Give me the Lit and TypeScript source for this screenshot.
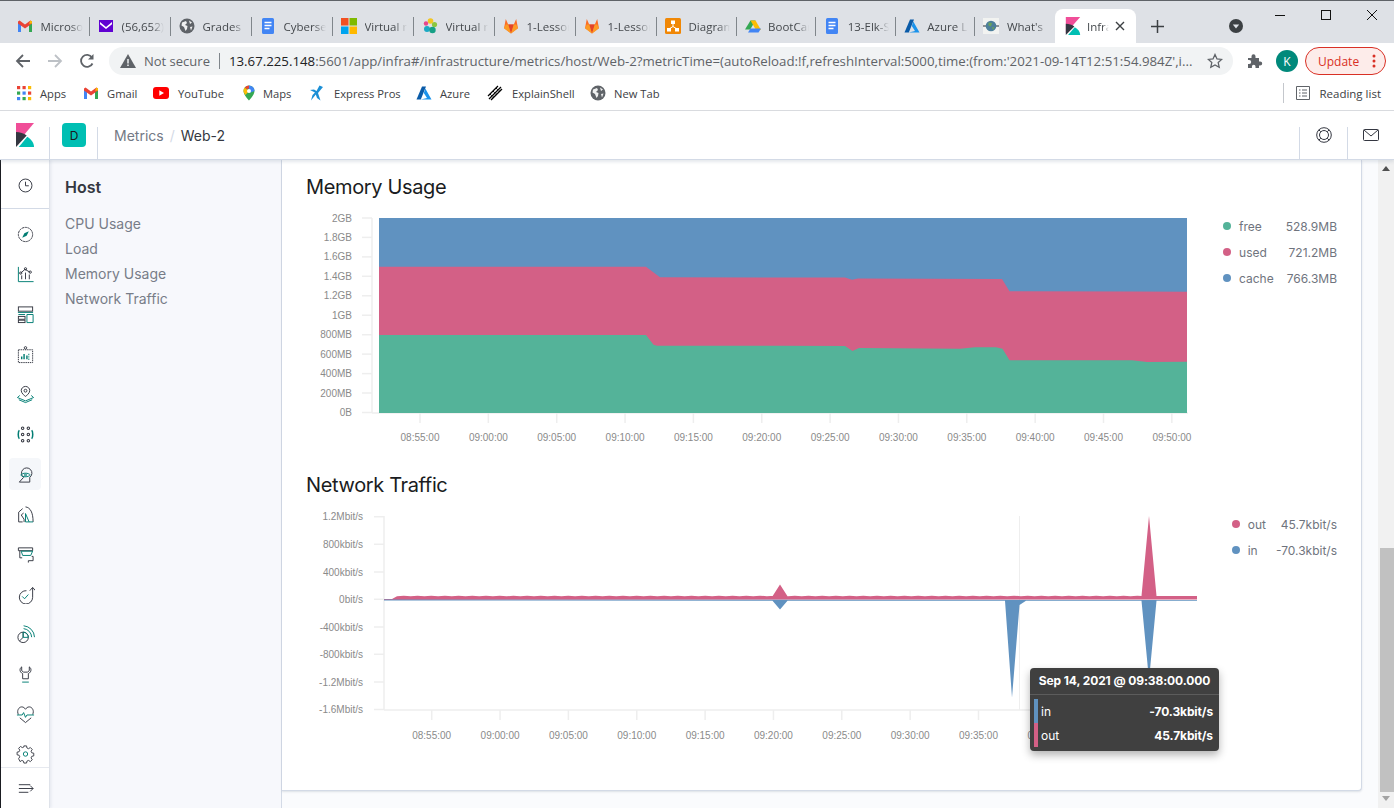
import { LitElement, html, css, svg } from 'lit';
import { customElement } from 'lit/decorators.js';

const BLUE = '#6092c0';
const PINK = '#d36086';
const GREEN = '#54b399';

const favicons: Record<string, any> = {
  gmail: svg`<path d="M1 4v10h3V7z" fill="#4285f4"/><path d="M15 4v10h-3V7z" fill="#34a853"/><path d="M1 3.5 2.6 2.4 8 6.6l5.4-4.2L15 3.5V5.4L8 10.6 1 5.4z" fill="#ea4335"/><path d="M12 5.8 13.4 2.4 15 3.5v2z" fill="#fbbc04"/>`,
  mail: svg`<rect x="1" y="2" width="14" height="12" fill="#6001d2"/><path d="M2 4l6 5 6-5v2.200L8 11 2 6.200z" fill="#fff"/>`,
  globe: svg`<circle cx="8" cy="8" r="7.500" fill="#5f6368"/><path d="M3 4.500 7 3l1 2-2 2 2.500 1L8 11l-1.500 2L5 9 2.500 7.500zM10 2.500l3 2-2 1.500zM11 9l2.500-.5L12 12.500z" fill="#fff" opacity=".9"/>`,
  docs: svg`<path d="M2 1.500A1.500 1.500 0 013.500 0h9A1.500 1.500 0 0114 1.500v13a1.500 1.500 0 01-1.500 1.500h-9A1.500 1.500 0 012 14.500z" fill="#4285f4"/><path d="M4.500 4.500h7M4.500 7.500h7M4.500 10.500h5" stroke="#fff" stroke-width="1.400"/>`,
  ms: svg`<rect x="0" y="0" width="7.500" height="7.500" fill="#f25022"/><rect x="8.500" y="0" width="7.500" height="7.500" fill="#7fba00"/><rect x="0" y="8.500" width="7.500" height="7.500" fill="#00a4ef"/><rect x="8.500" y="8.500" width="7.500" height="7.500" fill="#ffb900"/>`,
  virt: svg`<circle cx="8.500" cy="3" r="2.800" fill="#f3c623"/><circle cx="4" cy="5.500" r="2.200" fill="#e8478b"/><circle cx="12.500" cy="6.500" r="2.600" fill="#8cc63f"/><circle cx="5" cy="11" r="3" fill="#1ba9c4"/><circle cx="10.500" cy="12" r="3.200" fill="#16a086"/>`,
  gitlab: svg`<path d="M8 15.500 1 10.200 2.800 1l2.400 5.500h5.600L13.200 1 15 10.200z" fill="#fc6d26"/><path d="M8 15.500 5.200 6.500h5.600z" fill="#e24329"/><path d="M1 10.200 2.800 6.500h2.400L8 15.500zM15 10.200l-1.800-3.700h-2.400L8 15.500z" fill="#fca326" opacity=".85"/>`,
  diagram: svg`<rect x="0" y="0" width="16" height="16" rx="1.500" fill="#f08705"/><path d="M8 5.500v3M8 8.500 4 11M8 8.500l4 2.500" stroke="#fff"/><rect x="6" y="2.500" width="4" height="3.500" fill="#fff"/><rect x="2" y="10" width="4" height="3.500" fill="#fff"/><rect x="10" y="10" width="4" height="3.500" fill="#fff"/>`,
  drive: svg`<path d="M5.500 1.500h5L5.200 10.500H0z" fill="#34a853" transform="translate(0 1)"/><path d="M5.500 2.500h5l5.500 9.500h-5z" fill="#fbbc04"/><path d="M3 14.500l2.500-4H16l-2.500 4z" fill="#4285f4"/>`,
  azure: svg`<path d="M6 1.500h4L4.800 14.500H.5z" fill="#0a5ba8"/><path d="M9.300 3.500 15.500 14.500H4.800L11 13 7.800 8z" fill="#1b93eb"/>`,
  earth: svg`<rect x="0" y="0" width="16" height="16" fill="#f2f3f1"/><path d="M0 7h3v2H0zM13 7h3v2h-3z" fill="#8d9296"/><circle cx="8" cy="8" r="5.300" fill="#4d7f9b"/><path d="M5.500 4.500l3.500.5-1 3.500-2.500-1zM9 9l2.500.5-1.500 2.500z" fill="#6aa35a"/>`,
  kibana: svg`<path d="M0 0H16L0 18z" fill="#f04e98"/><path d="M0 7.500C3.500 7.500 7 8.500 9.500 10.500L0 20z" fill="#343741"/><path d="M2.500 20 10 11.500C13.500 13.500 16 16.500 16 20z" fill="#00bfb3"/>`,
};

const tabs = [
  { icon: 'gmail', title: 'Microsoft' },
  { icon: 'mail', title: '(56,652) Yahoo' },
  { icon: 'globe', title: 'Grades' },
  { icon: 'docs', title: 'Cybersecurity' },
  { icon: 'ms', title: 'Virtual machines' },
  { icon: 'virt', title: 'Virtual machines' },
  { icon: 'gitlab', title: '1-Lesson-Plans' },
  { icon: 'gitlab', title: '1-Lesson-Plans' },
  { icon: 'diagram', title: 'Diagrams' },
  { icon: 'drive', title: 'BootCamp' },
  { icon: 'docs', title: '13-Elk-Stack' },
  { icon: 'azure', title: 'Azure Labs' },
  { icon: 'earth', title: "What's" },
];

const bookmarks = [
  { icon: 'apps', label: 'Apps', gap: 8, width: 67 },
  { icon: 'gmail', label: 'Gmail', gap: 8, width: 70 },
  { icon: 'yt', label: 'YouTube', gap: 9, width: 88 },
  { icon: 'maps', label: 'Maps', gap: 6, width: 68 },
  { icon: 'xp', label: 'Express Pros', gap: 9, width: 107 },
  { icon: 'azure', label: 'Azure', gap: 8, width: 71 },
  { icon: 'shell', label: 'ExplainShell', gap: 9, width: 103 },
  { icon: 'globe', label: 'New Tab', gap: 8, width: 90 },
];

const bookmarkIcons: Record<string, any> = {
  ...favicons,
  apps: svg`${[0, 5.5, 11].flatMap((y, r) => [0, 5.5, 11].map((x, c) => svg`<rect x=${x + 1} y=${y + 1} width="3.200" height="3.200" fill=${[['#ea4335', '#ea4335', '#fbbc04'], ['#34a853', '#4285f4', '#ea4335'], ['#4285f4', '#34a853', '#fbbc04']][r][c]}/>`))}`,
  yt: svg`<rect x="0" y="2" width="16" height="12" rx="3" fill="#f00"/><path d="M6.300 5.200 11 8l-4.700 2.800z" fill="#fff"/>`,
  maps: svg`<path d="M8 0.500A5.500 5.500 0 002.500 6C2.500 10 8 15.500 8 15.500S13.500 10 13.500 6A5.500 5.500 0 008 .5z" fill="#34a853"/><path d="M8 .5A5.500 5.500 0 0113.500 6L8 8z" fill="#4285f4"/><path d="M3.800 2.500 8 6 4.500 10C3.500 8.800 2.500 7.200 2.500 6c0-1.400.5-2.600 1.300-3.500z" fill="#fbbc04"/><path d="M8 .5a5.500 5.500 0 00-4.200 2L6 4.300 8 3.500z" fill="#ea4335"/><circle cx="8" cy="6" r="2" fill="#fff"/>`,
  xp: svg`<path d="M10.500 0.500 14 2 9 8l2.500 7.500L8 13 6.800 9.500 2 15.500 3.500 10 6 7.500 1 5 5 4.500 7.500 6z" fill="#1a8fd6"/>`,
  shell: svg`<g stroke="#000" stroke-width="1.300" fill="none"><path d="M2 14 14 2M4 15 15 4M1 11 11 1"/><path d="M3 9l4 4M6 6l4 4M9 3l4 4" stroke-dasharray="1 1"/></g>`,
};

// stroke icons for the kibana side nav, dark lines with a teal accent
const navIcons = [
  svg`<circle cx="10" cy="10" r="6.800"/><path d="M10 6v4.300h3.500"/>`,
  svg`<circle cx="10" cy="10" r="7.500" stroke-dasharray="2.500 .6"/><path class="accent-fill" d="M13.500 6.500 11.200 11.200 6.500 13.500 8.800 8.800z"/>`,
  svg`<path class="accent" d="M2.500 2v15.500h16"/><path d="M6 15v-4M10 15V8M14 15v-5M5 8.500l4.500-4 5 3"/><circle cx="5" cy="8.500" r="1.200"/><circle cx="10" cy="4" r="1.200"/><circle cx="15" cy="7.500" r="1.200"/>`,
  svg`<rect x="2.500" y="2" width="15" height="4.500"/><rect x="2.500" y="12" width="7" height="3" /><rect x="2.500" y="16" width="7" height="2.500" /><path class="accent" d="M2 7.800h16M11.500 10h6.500v8.500h-6.500zM2.500 10h7"/>`,
  svg`<path d="M2.500 5h15v13.500h-15z" stroke-dasharray="1.500 .8"/><circle cx="10" cy="3" r="1.300"/><path class="accent" d="M6 15v-3M8.500 15V9.500M11.500 15V11M14 10h-1M14 12.500h-1M14 15h-1" stroke-width="1.500"/>`,
  svg`<path d="M10 1.500a4.500 4.500 0 014.500 4.500C14.500 9 10 12 10 12S5.500 9 5.500 6A4.500 4.500 0 0110 1.500z"/><circle cx="10" cy="6" r="1.500"/><path class="accent" d="M4 11 1.500 13.200l8.500 3.500 8.500-3.500L16 11M3 15.500l7 3 7-3"/>`,
  svg`<g stroke-width="1.100"><circle cx="7" cy="3.500" r="1.300"/><circle cx="13" cy="3.500" r="1.300"/><circle cx="7" cy="10" r="1.300"/><circle cx="13" cy="10" r="1.300"/><circle cx="7" cy="16.500" r="1.300"/><circle cx="13" cy="16.500" r="1.300"/></g><path class="accent" stroke-width="1.600" d="M3.500 5.500C2 7 2 13 3.500 14.500M16.500 5.500C18 7 18 13 16.500 14.500M2.500 10h.5M17 10h.5"/>`,
  svg`<path d="M2.500 17.500 7 12.500A5.500 5.500 0 1113.500 12.500V17.500z" transform="translate(1 .5)"/><path class="accent" d="M5 10.500C7 8 13 8 15 10.500 13 13 7 13 5 10.500z"/><circle class="accent" cx="10" cy="10.500" r="1"/>`,
  svg`<path d="M7 17.800H2.800V7.500L7 3.800M8 8.500 5.500 10.500l3 4.500v3"/><path d="M10 2C15 2.500 18 8 18 17.800"/><path class="accent" d="M18 17.800H10V9L13.800 17.800"/>`,
  svg`<path d="M2.500 3h15v3h-15zM4 6v7.500h2.500M13 16.500h5v-4.500h-1.500M13 16.500v2"/><path class="accent" d="M5.500 6.500h12L15.500 11h-8.500z"/>`,
  svg`<path d="M11 6a7 7 0 106.500 7V3"/><path d="M14.500 6l3-3.500 3 3.500"/><path class="accent" d="M6.500 12l2.500 2.500 4-4.500"/>`,
  svg`<circle cx="7.500" cy="13" r="5.500"/><path d="M7.500 13V7.500M7.500 13 3.500 17"/><path class="accent" d="M7.500 7.500A5.500 5.500 0 0113 13H7.500zM8 3.800a9.500 9.500 0 018.500 9M8 .8a12.500 12.500 0 0111.500 12"/>`,
  svg`<path d="M6 2C3.500 3.500 3.500 7.500 7 9v5.500h6V9C16.500 7.500 16.500 3.500 14 2v4l-2 1.500H8L6 6z"/><path class="accent" d="M6.500 18h7"/>`,
  svg`<path d="M10 18.500 4 13.500M10 18.500l6-5M2.500 10C.5 6 3 2 6 2c1.800 0 3 1 4 2.500C11 3 12.200 2 14 2c3 0 5.500 4 3.500 8"/><path class="accent" d="M1 10.500h5.500L8 8l2 5 1.500-2.500H19"/>`,
  svg`<path d="M8.500 1.500h3l.4 2.300 1.800.8 2-1.300 2.100 2.100-1.300 2 .8 1.800 2.200.4v3l-2.200.4-.8 1.800 1.300 2-2.100 2.100-2-1.300-1.800.8-.4 2.100h-3l-.4-2.100-1.800-.8-2 1.300L2.700 15.600l1.300-2-.8-1.800L1 11.400v-3l2.200-.4.8-1.800-1.300-2L4.800 2.100l2 1.300 1.800-.8z" transform="scale(.95) translate(.2 -.5)"/><circle class="accent" cx="10" cy="9.500" r="2.300"/>`,
  svg`<path d="M3 6h12M3 10h15M3 14h10"/><path d="M15 7l3 3-3 3" />`,
];

function axisTicks(x: number, ys: number[], labels: string[], labelX: number) {
  return ys.map(
    (y, i) => svg`<line class="tick" x1=${x - 10} x2=${x} y1=${y} y2=${y}></line>
      <text class="axis" x=${labelX} y=${y + 3.5} text-anchor="end">${labels[i]}</text>`
  );
}

function timeTicks(start: number, y: number, labelY: number, count: number) {
  const times = ['08:55:00', '09:00:00', '09:05:00', '09:10:00', '09:15:00', '09:20:00', '09:25:00', '09:30:00', '09:35:00', '09:40:00', '09:45:00', '09:50:00'];
  return times.slice(0, count).map((t, i) => {
    const x = start + i * 68.35;
    return svg`<line class="tick" x1=${x} x2=${x} y1=${y} y2=${y + 10}></line>
      <text class="axis" x=${x} y=${labelY} text-anchor="middle">${t}</text>`;
  });
}

// small ripple along the top of the outbound band, one bump per sample
function ripple(from: number, to: number) {
  const pts: string[] = [];
  for (let x = from; x < to; x += 13.7) {
    pts.push(`${x},596.300`, `${x + 6.8},595.700`);
  }
  return pts.join(' ');
}

const pinkTop = '379,266.700 646,266.700 660,277.300 845,277.500 852,279.700 858,278.500 1002,279 1009.500,291.300 1132,291.400 1187,291.800';
const greenTop = '379,335 646,335 653.500,344.700 657,345.700 780,345.700 845,346 852.500,351 859,348 960,348.700 975,347.300 996,347.300 1002.500,348.700 1009.500,360.300 1132,360.300 1147,362 1187,361.700';

const memoryChart = svg`
  <line class="tick" x1="372" x2="372" y1="218" y2="413"></line>
  <line class="tick" x1="372" x2="1188" y1="413" y2="413"></line>
  ${axisTicks(372, [218, 237.400, 256.900, 276.300, 295.800, 315.200, 334.700, 354.100, 373.600, 393, 412.500],
    ['2GB', '1.8GB', '1.6GB', '1.4GB', '1.2GB', '1GB', '800MB', '600MB', '400MB', '200MB', '0B'], 352)}
  ${timeTicks(420, 413, 441, 12)}
  <rect x="379" y="218" width="808" height="195" fill=${BLUE}></rect>
  <polygon points="${pinkTop} 1187,413 379,413" fill=${PINK}></polygon>
  <polygon points="${greenTop} 1187,413 379,413" fill=${GREEN}></polygon>
`;

const networkChart = svg`
  <line class="tick" x1="384" x2="384" y1="516" y2="710"></line>
  <line class="tick" x1="384" x2="1197" y1="710" y2="710"></line>
  <line class="cross" x1="1019.500" x2="1019.500" y1="516" y2="710"></line>
  ${axisTicks(384, [516.700, 544.300, 572, 599.300, 627, 654.300, 682, 709.500],
    ['1.2Mbit/s', '800kbit/s', '400kbit/s', '0bit/s', '-400kbit/s', '-800kbit/s', '-1.2Mbit/s', '-1.6Mbit/s'], 363)}
  ${timeTicks(431.700, 710, 739, 12)}
  <polygon fill=${BLUE} points="384,599 1197,600 1197,600.800 1156.500,600.800 1149,680 1141.500,600.800 1026,600.800 1019.500,605 1012,697.500 1005,600.800 787.500,600.800 780,609.500 772.500,600.800 384,600.500"></polygon>
  <polygon fill=${PINK} points="384,599 392,599 397,596.200 ${ripple(397, 772)} 772.500,596.200 780,584.500 787.500,596.200 ${ripple(788, 1141)} 1141.500,596 1149,516 1156.500,596 1197,596 1197,599.600 384,599.600"></polygon>
`;

const lifering = svg`<circle cx="8" cy="8" r="7.300"/><circle cx="8" cy="8" r="4.500"/><path d="M2.800 2.800l2 2M13.200 2.800l-2 2M2.800 13.200l2-2M13.200 13.200l-2-2"/>`;

@customElement('app-root')
export class AppRoot extends LitElement {
  static styles = css`
    :host {
      display: block;
      width: 1394px;
      height: 808px;
      overflow: hidden;
      position: relative;
      font-family: Inter, sans-serif;
      background: #fff;
    }
    svg { display: block; flex: none; }

    /* browser chrome */
    .tabstrip {
      height: 42px;
      background: #dee1e6;
      border-top: 1px solid #5f6368;
      display: flex;
      align-items: flex-end;
      padding-left: 9px;
      font-family: 'Open Sans', sans-serif;
      font-size: 11.500px;
      color: #45494d;
    }
    .tab {
      width: 79.600px;
      height: 34px;
      box-sizing: border-box;
      display: flex;
      align-items: center;
      padding-left: 8px;
      gap: 7.500px;
      position: relative;
      flex: none;
    }
    .tab:nth-child(-n+8) { width: 81px; }
    .tab::after {
      content: '';
      position: absolute;
      right: 0;
      top: 8px;
      height: 19px;
      width: 1px;
      background: #80868b;
    }
    .tab.last::after { display: none; }
    .tab .title {
      flex: 1;
      white-space: nowrap;
      overflow: hidden;
      margin-right: 7px;
      -webkit-mask-image: linear-gradient(90deg, #000 70%, transparent);
      mask-image: linear-gradient(90deg, #000 70%, transparent);
    }
    .tab.active {
      width: 81px;
      background: #fff;
      border-radius: 8px 8px 0 0;
      padding-left: 10px;
      gap: 6px;
    }
    .tab.active::after { display: none; }
    .tab.active .title { margin-right: 0; }
    .close { margin-right: 11px; }
    .plus { margin-left: 15.500px; margin-bottom: 10px; }
    .tabdot { margin-left: 64.500px; margin-bottom: 10px; }
    .winctl { margin-left: auto; margin-right: -1px; display: flex; align-self: flex-start; }
    .winctl div { width: 46px; height: 27px; display: flex; align-items: center; justify-content: center; }

    .toolbar {
      height: 36px;
      display: flex;
      align-items: center;
      padding-left: 15px;
    }
    .toolbar .nav { width: 32px; flex: none; }
    .omnibox {
      margin-left: -2px;
      width: 1124px;
      height: 28px;
      flex: none;
      border-radius: 14px;
      background: #f1f3f4;
      display: flex;
      align-items: center;
      padding: 0 10px 0 11px;
      box-sizing: border-box;
      font-family: 'Open Sans', sans-serif;
      font-size: 13px;
      color: #5f6368;
      white-space: nowrap;
    }
    .omnibox .sep { width: 1px; height: 16px; background: #80868b; margin: 0 9px; }
    .omnibox .url { flex: 1; overflow: hidden; font-size: 13.250px; }
    .omnibox b { font-weight: 400; color: #202124; }
    .omnibox .warn { margin: 0 8px 0 0; }
    .ext { margin-left: 14px; }
    .avatar {
      width: 22px;
      height: 22px;
      border-radius: 50%;
      background: #00897b;
      color: #fff;
      font: 12px 'Open Sans', sans-serif;
      display: flex;
      align-items: center;
      justify-content: center;
      margin-left: 13px;
      flex: none;
    }
    .update {
      margin-left: 7px;
      width: 81px;
      height: 28px;
      flex: none;
      box-sizing: border-box;
      border: 1px solid #d93025;
      border-radius: 14px;
      background: #fdecea;
      color: #d93025;
      font: 12px 'Open Sans', sans-serif;
      display: flex;
      align-items: center;
      padding-left: 12px;
      gap: 13px;
    }

    .bookmarks {
      height: 32px;
      display: flex;
      align-items: center;
      padding: 0 0 3px 16px;
      box-sizing: border-box;
      border-bottom: 1px solid #dadce0;
      font-family: 'Open Sans', sans-serif;
      font-size: 11.200px;
      color: #3c4043;
    }
    .bookmark { display: flex; align-items: center; white-space: nowrap; flex: none; }
    .reading {
      margin-left: auto;
      margin-right: 13px;
      display: flex;
      align-items: center;
      gap: 9px;
      border-left: 1px solid #c4c7cc;
      padding-left: 12px;
      height: 20px;
      font-size: 11.500px;
    }

    /* kibana header */
    .header {
      height: 49px;
      box-sizing: border-box;
      display: flex;
      align-items: center;
      background: #fff;
      border-bottom: 1px solid #d3dae6;
      box-shadow: 0 2px 3px rgba(152, 162, 179, 0.25);
      position: relative;
      z-index: 2;
    }
    .logo { width: 49px; display: flex; justify-content: center; flex: none; }
    .space {
      width: 49px;
      height: 32px;
      align-self: flex-end;
      flex: none;
      border-left: 1px solid #d3dae6;
      border-right: 1px solid #d3dae6;
      box-sizing: border-box;
      position: relative;
    }
    .badge {
      position: absolute;
      left: 12px;
      top: -4px;
      width: 24px;
      height: 24px;
      border-radius: 4px;
      background: #00bfb3;
      color: #1a1c21;
      font-size: 12px;
      display: flex;
      align-items: center;
      justify-content: center;
    }
    .crumbs { margin-left: 16px; font-size: 14px; color: #737985; display: flex; gap: 6px; }
    .crumbs i { font-style: normal; color: #d3dae6; }
    .crumbs b { font-weight: 400; color: #343741; }
    .hright { margin-left: auto; display: flex; align-self: stretch; align-items: flex-end; }
    .hbtn {
      width: 47px;
      height: 32px;
      box-sizing: border-box;
      border-left: 1px solid #d3dae6;
      display: flex;
      justify-content: center;
    }
    .hbtn.help { width: 48px; }
    .hbtn.mail svg { margin-top: 2px; }

    /* body */
    .body { display: flex; height: 648px; }
    .sidenav {
      width: 50px;
      flex: none;
      box-sizing: border-box;
      border-left: 1px solid #1a1c21;
      background: #fff;
      border-right: 1px solid #dfe3ea;
      box-shadow: 1px 0 3px rgba(152, 162, 179, 0.2);
      display: flex;
      flex-direction: column;
      align-items: center;
      position: relative;
      z-index: 1;
    }
    .navitem {
      width: 32px;
      height: 32px;
      flex: none;
      margin-bottom: 8px;
      display: flex;
      align-items: center;
      justify-content: center;
      border-radius: 4px;
    }
    .navitem.active { background: #f5f7fa; }
    .navitem svg { fill: none; stroke: #343741; stroke-width: 1; }
    .navitem .accent { stroke: #017d73; }
    .navitem .accent-fill { fill: #017d73; stroke: none; }
    .navtop {
      height: 49px;
      width: 100%;
      flex: none;
      display: flex;
      justify-content: center;
      padding-top: 9px;
      box-sizing: border-box;
      border-bottom: 1px solid #d3dae6;
      margin-bottom: 9px;
    }
    .navtop .navitem { margin: 0; }
    .navbottom {
      margin-top: -11px;
      width: 100%;
      height: 41px;
      flex: none;
      border-top: 1px solid #e6e9ef;
      display: flex;
      justify-content: center;
      align-items: center;
    }
    .navbottom .navitem { margin: 0; }

    .subnav {
      width: 232px;
      flex: none;
      box-sizing: border-box;
      background: #f7f8fc;
      border-right: 1px solid #d3dae6;
      padding: 17px 15px;
      color: #777d88;
      font-size: 14px;
    }
    .subnav h2 { margin: 0 0 14px; font-size: 16px; font-weight: 600; color: #343741; line-height: 20px; }
    .subnav div { height: 25px; line-height: 25px; }

    .content {
      flex: 1;
      background: #fafbfd;
      display: flex;
    }
    .panel {
      width: 1080px;
      height: 631px;
      flex: none;
      box-sizing: border-box;
      background: #fff;
      border-right: 1px solid #d3dae6;
      border-bottom: 1px solid #d3dae6;
      border-radius: 0 0 4px 0;
      box-shadow: 0 1px 2px rgba(152, 162, 179, 0.3);
      padding: 16px 24px 0;
      position: relative;
    }
    .panel h3 {
      margin: 0;
      font-size: 20px;
      line-height: 22px;
      font-weight: 400;
      letter-spacing: -0.36px;
      color: #1a1c21;
    }
    .chartrow { display: flex; }
    .memory { margin-top: 7px; height: 245px; }
    .network { margin-top: 9px; }
    .net-title { margin-top: 24px !important; }
    .tick { stroke: #eeeeee; stroke-width: 1.500; }
    .cross { stroke: #eeeeee; stroke-width: 1; }
    .axis { font: 10px 'Liberation Sans', sans-serif; fill: #8a8a8a; }

    .legend {
      margin-left: auto;
      display: grid;
      grid-template-columns: 8px auto auto;
      grid-auto-rows: 26px;
      align-items: center;
      align-content: start;
      font-size: 12px;
      color: #6f747e;
      white-space: nowrap;
    }
    .legend i { width: 8px; height: 8px; border-radius: 50%; }
    .legend span { margin-left: 8px; }
    .legend em { font-style: normal; text-align: right; margin-left: 12px; }
    .memory .legend { padding-top: 8px; }
    .network .legend { padding-top: 6px; }
    .network .legend em { margin-left: 10px; }

    .tooltip {
      position: absolute;
      left: 748px;
      top: 508px;
      width: 189px;
      height: 83px;
      box-sizing: border-box;
      background: #404040;
      border-radius: 4px;
      color: #fff;
      font-size: 12px;
      box-shadow: 0 4px 8px rgba(0, 0, 0, 0.3);
    }
    .tooltip .when {
      height: 26px;
      line-height: 26px;
      font-weight: 700;
      text-align: center;
      letter-spacing: -0.1px;
      border-bottom: 1px solid #5c5c5c;
    }
    .tooltip .rows { margin: 4px 6px 0 4px; }
    .tooltip .row {
      height: 24px;
      display: flex;
      align-items: center;
      border-left: 4px solid;
      padding-left: 3px;
    }
    .tooltip .row b { margin-left: auto; font-weight: 700; letter-spacing: -0.1px; }

    .scrollbar {
      width: 16px;
      margin-left: auto;
      flex: none;
      background: #f1f1f1;
      display: flex;
      flex-direction: column;
      align-items: center;
    }
    .scrollbar .thumb { width: 14px; height: 244px; background: #c1c1c1; margin-top: 377px; margin-left: 1px; }
    .arrow-up { width: 0; height: 0; margin-top: 6px; border: 4px solid transparent; border-top: 0; border-bottom: 5px solid #505050; }
    .arrow-down { width: 0; height: 0; margin-top: 4px; border: 4px solid transparent; border-bottom: 0; border-top: 5px solid #a3a3a3; }
  `;

  private fav(name: string, size = 16) {
    return html`<svg width=${size} height=${size} viewBox="0 0 16 16">${bookmarkIcons[name]}</svg>`;
  }

  private legend(rows: [string, string, string][]) {
    return html`<div class="legend">
      ${rows.map(([color, label, value]) => html`<i style="background:${color}"></i><span>${label}</span><em>${value}</em>`)}
    </div>`;
  }

  private navIcon(i: number, active = false) {
    return html`<div class="navitem ${active ? 'active' : ''}">
      <svg width="19" height="19" viewBox="0 0 20 20">${navIcons[i]}</svg>
    </div>`;
  }

  render() {
    return html`
      <div class="tabstrip">
        ${tabs.map((t, i) => html`<div class="tab ${i === tabs.length - 1 ? 'last' : ''}">${this.fav(t.icon)}<span class="title">${t.title}</span></div>`)}
        <div class="tab active">
          <svg width="16" height="18" viewBox="0 0 16 20">${favicons.kibana}</svg>
          <span class="title">Infrastructure</span>
          <svg class="close" width="10" height="10" viewBox="0 0 10 10"><path d="M1 1l8 8M9 1l-8 8" stroke="#3c4043" stroke-width="1.400"/></svg>
        </div>
        <svg class="plus" width="13" height="13" viewBox="0 0 13 13"><path d="M6.500 0v13M0 6.500h13" stroke="#3c4043" stroke-width="1.500"/></svg>
        <svg class="tabdot" width="14" height="14" viewBox="0 0 14 14"><circle cx="7" cy="7" r="7" fill="#3c4043"/><path d="M3.800 5.500h6.400L7 9.500z" fill="#dee1e6"/></svg>
        <div class="winctl">
          <div><svg width="10" height="10" viewBox="0 0 10 10"><path d="M0 5.500h10" stroke="#111" /></svg></div>
          <div><svg width="10" height="10" viewBox="0 0 10 10"><rect x=".5" y=".5" width="9" height="9" fill="none" stroke="#111"/></svg></div>
          <div><svg width="10" height="10" viewBox="0 0 10 10"><path d="M0 0l10 10M10 0L0 10" stroke="#111"/></svg></div>
        </div>
      </div>

      <div class="toolbar">
        <div class="nav"><svg width="16" height="16" viewBox="0 0 16 16"><path d="M15 8H2M8 2 2 8l6 6" fill="none" stroke="#5f6368" stroke-width="1.800"/></svg></div>
        <div class="nav"><svg width="16" height="16" viewBox="0 0 16 16"><path d="M1 8h13M8 2l6 6-6 6" fill="none" stroke="#bdc1c6" stroke-width="1.800"/></svg></div>
        <div class="nav"><svg width="16" height="16" viewBox="0 0 16 16"><path d="M13.500 10.500A6 6 0 1113 4.500" fill="none" stroke="#5f6368" stroke-width="1.800"/><path d="M14.500 1v5.500H9z" fill="#5f6368"/></svg></div>
        <div class="omnibox">
          <svg class="warn" width="16" height="14" viewBox="0 0 16 14"><path d="M8 0l8 14H0z" fill="#5f6368"/><path d="M8 5v4.500M8 10.500V12" stroke="#f1f3f4" stroke-width="1.500"/></svg>
          <span>Not secure</span><span class="sep"></span>
          <span class="url"><b>13.67.225.148</b>:5601/app/infra#/infrastructure/metrics/host/Web-2?metricTime=(autoReload:!f,refreshInterval:5000,time:(from:'2021-09-14T12:51:54.984Z',i...</span>
          <svg width="16" height="16" viewBox="0 0 16 16"><path d="M8 1.500l2 4.400 4.700.5-3.500 3.200 1 4.700L8 11.900l-4.200 2.400 1-4.700L1.300 6.400 6 5.900z" fill="none" stroke="#5f6368" stroke-width="1.300"/></svg>
        </div>
        <svg class="ext" width="16" height="16" viewBox="0 0 16 16"><path d="M1 5h3.500V3.200a2 2 0 014 0V5H12v3.500h1.200a2 2 0 010 4H12V15H8.500v-1.500a1.800 1.800 0 00-3.600 0V15H1v-4h1.200a2 2 0 000-4H1z" fill="#5f6368"/></svg>
        <div class="avatar">K</div>
        <div class="update">Update
          <svg width="4" height="14" viewBox="0 0 4 14"><circle cx="2" cy="2" r="1.500" fill="#d93025"/><circle cx="2" cy="7" r="1.500" fill="#d93025"/><circle cx="2" cy="12" r="1.500" fill="#d93025"/></svg>
        </div>
      </div>

      <div class="bookmarks">
        ${bookmarks.map(b => html`<div class="bookmark" style="width:${b.width}px">${this.fav(b.icon)}<span style="margin-left:${b.gap}px">${b.label}</span></div>`)}
        <div class="reading">
          <svg width="14" height="14" viewBox="0 0 14 14"><path d="M.5.500h13v13H.5zM3 4h1.500M3 7h1.500M3 10h1.500M6 4h5M6 7h5M6 10h5" fill="none" stroke="#5f6368"/></svg>
          <span>Reading list</span>
        </div>
      </div>

      <div class="header">
        <div class="logo"><svg width="18" height="24" viewBox="0 0 16 20" preserveAspectRatio="none">${favicons.kibana}</svg></div>
        <div class="space"><div class="badge">D</div></div>
        <div class="crumbs"><span>Metrics</span><i>/</i><b>Web-2</b></div>
        <div class="hright">
          <div class="hbtn help"><svg width="16" height="16" viewBox="0 0 16 16" fill="none" stroke="#343741">${lifering}</svg></div>
          <div class="hbtn mail"><svg width="16" height="12" viewBox="0 0 16 12" fill="none" stroke="#343741"><rect x=".5" y=".5" width="15" height="11" rx="1"/><path d="M1 1l7 6 7-6"/></svg></div>
        </div>
      </div>

      <div class="body">
        <nav class="sidenav">
          <div class="navtop">${this.navIcon(0)}</div>
          ${navIcons.slice(1, 15).map((_, i) => this.navIcon(i + 1, i === 6))}
          <div class="navbottom">${this.navIcon(15)}</div>
        </nav>
        <aside class="subnav">
          <h2>Host</h2>
          <div>CPU Usage</div>
          <div>Load</div>
          <div>Memory Usage</div>
          <div>Network Traffic</div>
        </aside>
        <main class="content">
          <section class="panel">
            <h3>Memory Usage</h3>
            <div class="chartrow memory">
              <svg width="900" height="245" viewBox="306 205 900 245">${memoryChart}</svg>
              ${this.legend([[GREEN, 'free', '528.9MB'], [PINK, 'used', '721.2MB'], [BLUE, 'cache', '766.3MB']])}
            </div>
            <h3 class="net-title">Network Traffic</h3>
            <div class="chartrow network">
              <svg width="900" height="240" viewBox="306 505 900 240">${networkChart}</svg>
              ${this.legend([[PINK, 'out', '45.7kbit/s'], [BLUE, 'in', '-70.3kbit/s']])}
            </div>
            <div class="tooltip">
              <div class="when">Sep 14, 2021 @ 09:38:00.000</div>
              <div class="rows">
                <div class="row" style="border-color:${BLUE}">in<b>-70.3kbit/s</b></div>
                <div class="row" style="border-color:${PINK}">out<b>45.7kbit/s</b></div>
              </div>
            </div>
          </section>
          <div class="scrollbar">
            <div class="arrow-up"></div>
            <div class="thumb"></div>
            <div class="arrow-down"></div>
          </div>
        </main>
      </div>
    `;
  }
}
